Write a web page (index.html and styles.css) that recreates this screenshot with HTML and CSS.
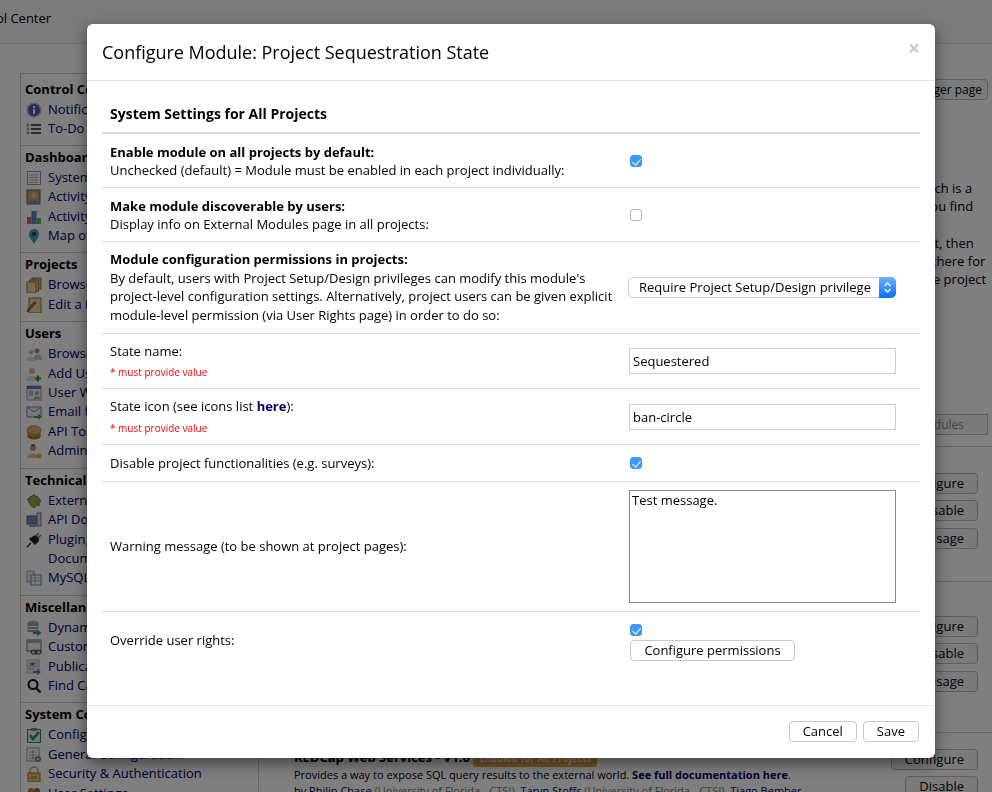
FILE: index.html
```html
<!DOCTYPE html>
<html lang="en">
<head>
    <meta charset="UTF-8">
    <meta name="viewport" content="width=device-width, initial-scale=1.0">
    <title>Configure Module</title>
    <link rel="stylesheet" href="styles.css">
</head>
<body>
    <svg class="sprite" xmlns="http://www.w3.org/2000/svg">
        <symbol id="i-info" viewBox="0 0 16 16"><circle cx="8" cy="8" r="7.5" fill="#b9b9b9"/><circle cx="8" cy="8" r="6" fill="#3f5fc8"/><rect x="7" y="7" width="2" height="5" fill="#fff"/><rect x="7" y="4" width="2" height="2" fill="#fff"/></symbol>
        <symbol id="i-list" viewBox="0 0 16 16"><path d="M5 4h10M5 8h10M5 12h10" stroke="#222" stroke-width="1.4"/><path d="M1 3h2v2H1zM1 7h2v2H1zM1 11h2v2H1z" fill="none" stroke="#777" stroke-width=".8"/></symbol>
        <symbol id="i-table" viewBox="0 0 16 16"><rect x="1.5" y="1.5" width="13" height="13" fill="#fff" stroke="#7b9cc4"/><path d="M3 5h10M3 7.500h10M3 10h10M3 12.500h10M6 4v9M10 4v9" stroke="#c9b48a" stroke-width=".8"/></symbol>
        <symbol id="i-contact" viewBox="0 0 16 16"><rect x="1" y="1" width="13" height="14" fill="#c9a06a" stroke="#7a5a30"/><circle cx="8" cy="6" r="3" fill="#e8c09a"/><path d="M3 15c0-5 10-5 10 0z" fill="#5f8fd0"/></symbol>
        <symbol id="i-bars" viewBox="0 0 16 16"><rect x="1" y="8" width="4.500" height="7" fill="#d65a5a"/><rect x="5.500" y="2" width="5" height="13" fill="#5a7fd0"/><rect x="10.500" y="9" width="4.500" height="6" fill="#5fae5f"/></symbol>
        <symbol id="i-pin" viewBox="0 0 16 16"><path d="M8 16C5 11 3 9 3 6a5 5 0 0 1 10 0c0 3-2 5-5 10z" fill="#3fa0b0"/><circle cx="8" cy="6" r="2" fill="#1c3c44"/></symbol>
        <symbol id="i-folders" viewBox="0 0 16 16"><rect x="6" y="1" width="9" height="11" fill="#d9b877" stroke="#94763c"/><rect x="3.500" y="3" width="9" height="11" fill="#e3c78c" stroke="#94763c"/><rect x="1" y="5" width="9" height="11" fill="#eed49c" stroke="#94763c"/></symbol>
        <symbol id="i-edit" viewBox="0 0 16 16"><rect x="3" y="1" width="12" height="15" fill="#eed49c" stroke="#94763c"/><path d="M1 15l2-1 7-8-1.500-1.500-7 8z" fill="#d65a3a" stroke="#333" stroke-width=".5"/></symbol>
        <symbol id="i-users" viewBox="0 0 16 16"><circle cx="5" cy="6" r="2.500" fill="#dcb896"/><circle cx="11" cy="5" r="2.500" fill="#b98d68"/><path d="M0 15c0-6 10-6 10 0z" fill="#ddd"/><path d="M8 12c0-5 8-5 8 0v2H9z" fill="#c6c6c6"/></symbol>
        <symbol id="i-add" viewBox="0 0 16 16"><circle cx="6" cy="5" r="3" fill="#dcb896"/><path d="M0 15c0-7 12-7 12 0z" fill="#ddd"/><path d="M9 12.500h6M12 9.500v6" stroke="#2f9a3a" stroke-width="2.200"/></symbol>
        <symbol id="i-white" viewBox="0 0 16 16"><rect x="1" y="1" width="14" height="14" fill="#f2f2f2" stroke="#99a"/><rect x="1" y="1" width="14" height="3" fill="#4f78c0"/><path d="M3 6h4M3 8h4M3 10h4" stroke="#889"/><circle cx="11" cy="8" r="2" fill="#c79a76"/><path d="M8 14c0-4 6-4 6 0z" fill="#aaa"/></symbol>
        <symbol id="i-mail" viewBox="0 0 16 16"><rect x="1" y="3" width="14" height="10" fill="#eef2fa" stroke="#6d86b4"/><path d="M1 3l7 5 7-5" fill="none" stroke="#6d86b4"/><path d="M8 12h4v-2.500l4 3.500-4 3v-2H8z" fill="#4fa04f"/></symbol>
        <symbol id="i-coins" viewBox="0 0 16 16"><ellipse cx="8" cy="12" rx="7" ry="3.500" fill="#a97b3f"/><ellipse cx="8" cy="9" rx="7" ry="3.500" fill="#c0914f"/><ellipse cx="8" cy="6" rx="7" ry="4.500" fill="#d9ad6c" stroke="#a97b3f" stroke-width=".6"/></symbol>
        <symbol id="i-admin" viewBox="0 0 16 16"><circle cx="7" cy="5" r="3" fill="#c79a66"/><path d="M6 3.500a3 3 0 0 1 3-1V1.500H5z" fill="#333"/><path d="M1 15c0-6 11-6 11 0z" fill="#e4c78a"/><circle cx="13" cy="13" r="2.500" fill="#d9b23c"/></symbol>
        <symbol id="i-puzzle" viewBox="0 0 16 16"><path d="M1 7l4-4 1 1c0-3 4-3 3 0l2-1 4 5-3 2c3 0 2 4-1 2l-3 3-4-3 1-2c-3 1-3-3-1-3z" fill="#8fb04a" stroke="#4a5e22" stroke-width=".7"/></symbol>
        <symbol id="i-api" viewBox="0 0 16 16"><rect x="1" y="4" width="10" height="8" fill="#5f8fd0" stroke="#667"/><rect x="11" y="1" width="4" height="13" fill="#d8d8d8" stroke="#778"/><rect x="3" y="13" width="7" height="2" fill="#999"/></symbol>
        <symbol id="i-plug" viewBox="0 0 16 16"><path d="M1 15l4-4M4 7l5 5 3-3c1-2 0-3-1-4L9 4z" fill="#222" stroke="#222" stroke-width="1.400"/><path d="M10 4l3-3M12 6l3-3" stroke="#777" stroke-width="1.400"/></symbol>
        <symbol id="i-mysql" viewBox="0 0 16 16"><rect x="1" y="1" width="7" height="11" fill="#e8e8e8" stroke="#aaa"/><rect x="5" y="5" width="10" height="10" fill="#fff" stroke="#6d86b4"/><path d="M5 8h10M5 11h10M9 5v10" stroke="#6d86b4" stroke-width=".7"/></symbol>
        <symbol id="i-pipe" viewBox="0 0 16 16"><ellipse cx="7" cy="3" rx="5.500" ry="2.500" fill="#b3b3b3"/><rect x="1.500" y="3" width="11" height="9" fill="#a3a3a3"/><path d="M1.500 6.500h11M1.500 9.500h11" stroke="#eee"/><path d="M7 12h4v-2.500l4.500 3.500-4.500 3v-2H7z" fill="#3f82d0"/></symbol>
        <symbol id="i-link" viewBox="0 0 16 16"><rect x="1" y="1" width="14" height="11" fill="#f4f4f4" stroke="#666"/><rect x="1" y="1" width="14" height="3" fill="#aaa"/><ellipse cx="8" cy="13" rx="3" ry="2" fill="none" stroke="#555" stroke-width="1.200"/><ellipse cx="12" cy="13" rx="3" ry="2" fill="none" stroke="#555" stroke-width="1.200"/></symbol>
        <symbol id="i-pub" viewBox="0 0 16 16"><rect x="1" y="1" width="12" height="13" fill="#e6e6e6" stroke="#b3b3b3"/><path d="M3 4h8M3 7h8M3 10h5" stroke="#999"/><rect x="5" y="4" width="3" height="2" fill="#666"/><path d="M7 12h4v-2l4 3-4 3v-2H7z" fill="#3f82d0"/></symbol>
        <symbol id="i-find" viewBox="0 0 16 16"><circle cx="7" cy="6.500" r="4.500" fill="none" stroke="#111" stroke-width="2"/><path d="M10 10l4.500 4.500" stroke="#111" stroke-width="2.400"/></symbol>
        <symbol id="i-check" viewBox="0 0 16 16"><rect x="1.500" y="2.500" width="13" height="13" fill="#eee" stroke="#2f7f8f"/><rect x="5" y="1" width="6" height="3" fill="#888"/><path d="M4 8l3 4 6-7" fill="none" stroke="#2f9a3a" stroke-width="2.600"/></symbol>
        <symbol id="i-general" viewBox="0 0 16 16"><rect x="1" y="1" width="12" height="13" fill="#fff" stroke="#7b9cc4"/><path d="M3 5h8M3 8h8M3 11h8M7 3v10" stroke="#7aa07a" stroke-width=".8"/><circle cx="12" cy="12" r="3" fill="#8a8a8a"/><circle cx="12" cy="12" r="1" fill="#eee"/></symbol>
        <symbol id="i-lock" viewBox="0 0 16 16"><path d="M4 8V5a4 4 0 0 1 8 0v3" fill="none" stroke="#aaa" stroke-width="1.600"/><rect x="2" y="7" width="12" height="9" fill="#e8bf5a" stroke="#94763c"/><rect x="5" y="10" width="6" height="3" fill="#c79a36"/></symbol>
        <symbol id="i-settings" viewBox="0 0 16 16"><circle cx="5" cy="5" r="3" fill="#c08040"/><circle cx="11" cy="5" r="3" fill="#a06a30"/><path d="M0 14c0-5 16-5 16 0z" fill="#8a6a3a"/></symbol>
    </svg>

    <div class="page">
        <div class="top-bar"><span class="top-title">Control Center</span></div>
        <div class="columns">
            <div class="side-menu">
                <div class="menu-group first">
                    <div class="menu-head">Control Center Home</div>
                    <a class="menu-item"><svg><use href="#i-info"/></svg>Notifications &amp; Reporting</a>
                    <a class="menu-item"><svg><use href="#i-list"/></svg>To-Do List</a>
                </div>
                <div class="menu-group">
                    <div class="menu-head">Dashboard</div>
                    <a class="menu-item"><svg><use href="#i-table"/></svg>System Statistics</a>
                    <a class="menu-item"><svg><use href="#i-contact"/></svg>Activity Log</a>
                    <a class="menu-item"><svg><use href="#i-bars"/></svg>Activity Graphs</a>
                    <a class="menu-item"><svg><use href="#i-pin"/></svg>Map of Users</a>
                </div>
                <div class="menu-group">
                    <div class="menu-head">Projects</div>
                    <a class="menu-item"><svg><use href="#i-folders"/></svg>Browse Projects</a>
                    <a class="menu-item"><svg><use href="#i-edit"/></svg>Edit a Project's Settings</a>
                </div>
                <div class="menu-group">
                    <div class="menu-head">Users</div>
                    <a class="menu-item"><svg><use href="#i-users"/></svg>Browse Users</a>
                    <a class="menu-item"><svg><use href="#i-add"/></svg>Add Users (Table-based Only)</a>
                    <a class="menu-item"><svg><use href="#i-white"/></svg>User Whitelist</a>
                    <a class="menu-item"><svg><use href="#i-mail"/></svg>Email Users</a>
                    <a class="menu-item"><svg><use href="#i-coins"/></svg>API Tokens</a>
                    <a class="menu-item"><svg><use href="#i-admin"/></svg>Administrator Privileges</a>
                </div>
                <div class="menu-group">
                    <div class="menu-head">Technical / Developer Tools</div>
                    <a class="menu-item"><svg><use href="#i-puzzle"/></svg>External Modules</a>
                    <a class="menu-item"><svg><use href="#i-api"/></svg>API Documentation</a>
                    <a class="menu-item"><svg><use href="#i-plug"/></svg><span>Plugin, Hook, &amp; External Module<br>Documentation</span></a>
                    <a class="menu-item"><svg><use href="#i-mysql"/></svg>MySQL Dashboard</a>
                </div>
                <div class="menu-group">
                    <div class="menu-head">Miscellaneous Modules</div>
                    <a class="menu-item"><svg><use href="#i-pipe"/></svg>Dynamic Data Pipe</a>
                    <a class="menu-item"><svg><use href="#i-link"/></svg>Custom Application Links</a>
                    <a class="menu-item"><svg><use href="#i-pub"/></svg>Publication Matching</a>
                    <a class="menu-item"><svg><use href="#i-find"/></svg>Find Calculation Errors</a>
                </div>
                <div class="menu-group">
                    <div class="menu-head">System Configuration</div>
                    <a class="menu-item"><svg><use href="#i-check"/></svg>Configuration Check</a>
                    <a class="menu-item"><svg><use href="#i-general"/></svg>General Configuration</a>
                    <a class="menu-item"><svg><use href="#i-lock"/></svg>Security &amp; Authentication</a>
                    <a class="menu-item"><svg><use href="#i-settings"/></svg>User Settings</a>
                </div>
            </div>

            <div class="main">
                <div class="manager-row"><button class="page-btn manager-btn">View Module Manager page</button></div>
                <p class="intro">
                    External Modules are individual packages of software that could be downloaded and installed, each of which is a<br>
                    piece of software that extends REDCap's current functionality in some fine way. If the given module that you find<br>
                    in the library is not yet installed on this server, it can be downloaded from the repository and set up here.<br>
                    When the module has been installed on this server it must be enabled at the system level by an admin first, then<br>
                    in each project where it will be used. Settings are configured by administrators, on this page and are kept there for<br>
                    all projects, and each one can also have its own settings changed by users, on the module's page inside the project
                </p>
                <div class="modules-row"><button class="page-btn muted">View modules</button></div>

                <div class="module first">
                    <div class="module-text"><strong>Mass Delete</strong></div>
                    <div class="module-btns">
                        <button class="page-btn">Configure</button>
                        <button class="page-btn">Disable</button>
                        <button class="page-btn">View Usage</button>
                    </div>
                </div>
                <div class="module second">
                    <div class="module-text"><strong>Project Sequestration State</strong></div>
                    <div class="module-btns">
                        <button class="page-btn">Configure</button>
                        <button class="page-btn">Disable</button>
                        <button class="page-btn">View Usage</button>
                    </div>
                </div>
                <div class="module third">
                    <div class="module-text">
                        <strong>REDCap Web Services - V1.0</strong> <span class="badge">Enabled for All Projects</span>
                        <div class="module-desc">
                            Provides a way to expose SQL query results to the external world. <a class="doc-link">See full documentation here</a>.<br>
                            by <a class="person">Philip Chase</a> <span class="org">(University of Florida - CTSI)</span>, <a class="person">Taryn Stoffs</a> <span class="org">(University of Florida - CTSI)</span>, <a class="person">Tiago Bember</a>
                        </div>
                    </div>
                    <div class="module-btns">
                        <button class="page-btn">Configure</button>
                        <button class="page-btn">Disable</button>
                    </div>
                </div>
            </div>
        </div>
    </div>

    <div class="backdrop"></div>

    <div class="modal">
        <div class="modal-header">
            <button class="close">&times;</button>
            <h4 class="modal-title">Configure Module: Project Sequestration State</h4>
        </div>
        <div class="modal-body">
            <table class="settings">
                <colgroup><col class="col-label"><col class="col-value"></colgroup>
                <thead>
                    <tr><th colspan="2">System Settings for All Projects</th></tr>
                </thead>
                <tbody>
                    <tr class="nudged">
                        <td><b>Enable module on all projects by default:</b><br>Unchecked (default) = Module must be enabled in each project individually:</td>
                        <td><input type="checkbox" class="check" checked></td>
                    </tr>
                    <tr class="nudged">
                        <td><b>Make module discoverable by users:</b><br>Display info on External Modules page in all projects:</td>
                        <td><input type="checkbox" class="check"></td>
                    </tr>
                    <tr class="tall">
                        <td><b>Module configuration permissions in projects:</b><br>By default, users with Project Setup/Design privileges can modify this module's project-level configuration settings. Alternatively, project users can be given explicit module-level permission (via User Rights page) in order to do so:</td>
                        <td>
                            <div class="select-wrap">
                                <select class="select-box">
                                    <option>Require Project Setup/Design privilege</option>
                                </select>
                                <span class="select-arrows">
                                    <svg width="9" height="13" viewBox="0 0 9 13"><path d="M1.500 5L4.500 2l3 3M1.500 8l3 3 3-3" fill="none" stroke="#fff" stroke-width="1.300"/></svg>
                                </span>
                            </div>
                        </td>
                    </tr>
                    <tr>
                        <td>State name:<div class="required">* must provide value</div></td>
                        <td><input type="text" class="text-input" value="Sequestered"></td>
                    </tr>
                    <tr>
                        <td>State icon (see icons list <a class="here">here</a>):<div class="required">* must provide value</div></td>
                        <td><input type="text" class="text-input" value="ban-circle"></td>
                    </tr>
                    <tr>
                        <td>Disable project functionalities (e.g. surveys):</td>
                        <td><input type="checkbox" class="check" checked></td>
                    </tr>
                    <tr>
                        <td>Warning message (to be shown at project pages):</td>
                        <td><textarea class="text-area">Test message.</textarea></td>
                    </tr>
                    <tr>
                        <td>Override user rights:</td>
                        <td>
                            <input type="checkbox" class="check" checked>
                            <button class="btn perm-btn">Configure permissions</button>
                        </td>
                    </tr>
                </tbody>
            </table>
        </div>
        <div class="modal-footer">
            <button class="btn">Cancel</button>
            <button class="btn">Save</button>
        </div>
    </div>
</body>
</html>
```

FILE: styles.css
```css
* {
    box-sizing: border-box;
}
html, body {
    margin: 0;
    height: 100%;
    overflow: hidden;
}
body {
    font-family: "Open Sans", sans-serif;
    font-size: 13px;
    line-height: 1.42857;
    color: #000;
    background: #fff;
}
button, input, select, textarea {
    font-family: inherit;
    font-size: 13px;
    color: #000;
}
.sprite {
    display: none;
}

/* page behind the dialog */
.page {
    height: 100vh;
    overflow: hidden;
}
.top-bar {
    height: 44px;
    padding-top: 9px;
    border-bottom: 1px solid #e7e7e7;
    background: #f8f8f8;
}
.top-title {
    display: block;
    margin-left: -38px;
}
.columns {
    display: flex;
    align-items: flex-start;
}
.side-menu {
    flex: 0 0 239px;
    margin: 29px 0 0 20px;
    border: 1px solid #ccc;
    border-width: 1px 1px 0 1px;
}
.menu-group {
    padding: 2px 0 7px 4px;
    border-top: 1px solid #ccc;
}
.menu-group.first {
    padding-top: 6px;
    padding-bottom: 6px;
    border-top: 0;
}
.menu-head {
    height: 20px;
    font-weight: bold;
    white-space: nowrap;
}
.menu-item {
    display: flex;
    align-items: flex-start;
    gap: 6px;
    padding-left: 1px;
    line-height: 19.4px;
    color: #000066;
    white-space: nowrap;
}
.menu-item svg {
    flex: none;
    width: 16px;
    height: 16px;
    margin-top: 2px;
}

.main {
    flex: 1;
    min-width: 0;
    padding: 35px 0 0 35px;
}
.manager-row {
    display: flex;
    justify-content: flex-end;
    padding-right: 4px;
}
.page-btn {
    height: 21px;
    padding: 0 13px;
    border: 1px solid #bbb;
    border-radius: 4px;
    background: #f7f7f7;
    line-height: 17px;
    white-space: nowrap;
}
.manager-btn {
    padding-right: 5px;
    font-size: 12px;
}
.page-btn.muted {
    padding-right: 23px;
    color: #888;
    font-size: 12px;
    border-radius: 0;
}
.intro {
    margin: 79px 0 0;
    line-height: 18.2px;
    white-space: nowrap;
}
.modules-row {
    display: flex;
    justify-content: flex-end;
    height: 32px;
    margin-top: 126px;
    padding-right: 4px;
}
.module {
    display: flex;
    justify-content: space-between;
    margin-left: -35px;
    padding: 26px 14px 0 35px;
    border-top: 1px solid #ccc;
}
.module.first {
    height: 135px;
}
.module.second {
    height: 151px;
    padding-top: 34px;
}
.module.third {
    padding-top: 16px;
}
.module-text {
    flex: 1;
    min-width: 0;
    line-height: 16px;
    white-space: nowrap;
}
.module-desc {
    font-size: 11px;
    line-height: 15.5px;
}
.module-btns {
    display: flex;
    flex-direction: column;
    align-items: flex-end;
    gap: 6.250px;
}
.badge {
    display: inline-block;
    padding: 0 6px;
    border-radius: 3px;
    background: #e8a84a;
    color: #fff;
    font-size: 9.700px;
    font-weight: bold;
}
.doc-link {
    color: #000066;
    font-weight: bold;
}
.person {
    color: #000066;
}
.org {
    color: #777;
}

.backdrop {
    position: fixed;
    top: 0;
    right: 0;
    bottom: 0;
    left: 0;
    background: rgba(0, 0, 0, 0.5);
}

/* dialog */
.modal {
    position: absolute;
    top: 24px;
    left: 87px;
    width: 848px;
    background: #fff;
    border-radius: 6px;
    box-shadow: 0 5px 15px rgba(0, 0, 0, 0.5);
}
.modal-header {
    padding: 16px 15px 14px;
    border-bottom: 1px solid #e5e5e5;
}
.modal-title {
    margin: 0;
    font-size: 18px;
    font-weight: normal;
    line-height: 1.42857;
    letter-spacing: -0.02px;
}
.close {
    float: right;
    margin-top: -2px;
    padding: 0;
    border: 0;
    background: none;
    color: #000;
    opacity: 0.2;
    font-size: 21px;
    font-weight: bold;
    line-height: 1;
}
.modal-body {
    padding: 15px;
}
.settings {
    width: 100%;
    margin-bottom: 21px;
    border-collapse: collapse;
    table-layout: fixed;
}
.col-label {
    width: 519px;
}
.settings th {
    padding: 8px;
    border-bottom: 2px solid #ddd;
    font-size: 14px;
    text-align: left;
}
.settings td {
    padding: 8px;
    border-top: 1px solid #ddd;
    vertical-align: middle;
}
.settings tbody tr:first-child td {
    border-top: 0;
}
.settings .nudged td {
    padding-top: 9px;
    padding-bottom: 7px;
}
.settings .tall td {
    padding-bottom: 8.500px;
}
.required {
    margin-top: 5px;
    color: #f00;
    font-size: 10px;
    line-height: 15px;
}
.here {
    color: #000066;
    font-weight: bold;
}
.check {
    appearance: none;
    position: relative;
    display: block;
    width: 12px;
    height: 12px;
    margin: 4px 0 4px 1px;
    border: 1px solid #b4b4b4;
    border-radius: 3px;
    background: #fff;
}
.check:checked {
    border-color: #3b99fc;
    background: #3b99fc;
}
.check:checked::after {
    content: "";
    position: absolute;
    left: 3px;
    top: 1px;
    width: 4px;
    height: 7px;
    border: solid #fff;
    border-width: 0 1.5px 1.5px 0;
    transform: rotate(40deg);
}
.text-input {
    display: block;
    width: 267px;
    height: 26px;
    padding: 0 3px;
    border: 1px solid #ccc;
}
.text-area {
    display: block;
    width: 267px;
    height: 113px;
    padding: 0 2px;
    border: 1px solid #888;
    resize: none;
}
.select-wrap {
    position: relative;
    width: 268px;
    height: 21px;
    margin-left: -1px;
}
.select-box {
    appearance: none;
    display: block;
    width: 100%;
    height: 21px;
    padding: 0 20px 0 10px;
    border: 1px solid #ccc;
    border-radius: 5px;
    background: #fff;
}
.select-arrows {
    position: absolute;
    top: 0;
    right: 0;
    display: flex;
    align-items: center;
    justify-content: center;
    width: 17px;
    height: 21px;
    border-radius: 0 5px 5px 0;
    background: linear-gradient(#6cb3fa, #0a6ffd);
    pointer-events: none;
}
.btn {
    height: 21px;
    padding: 0 13px;
    border: 1px solid #c8c8c8;
    border-radius: 4px;
    background: #fff;
    line-height: 17px;
}
.perm-btn {
    display: block;
    width: 165px;
    margin-left: 1px;
    padding: 0;
}
.modal-footer {
    display: flex;
    justify-content: flex-end;
    gap: 6px;
    padding: 15px 16px 16px 15px;
    border-top: 1px solid #e5e5e5;
}
```
